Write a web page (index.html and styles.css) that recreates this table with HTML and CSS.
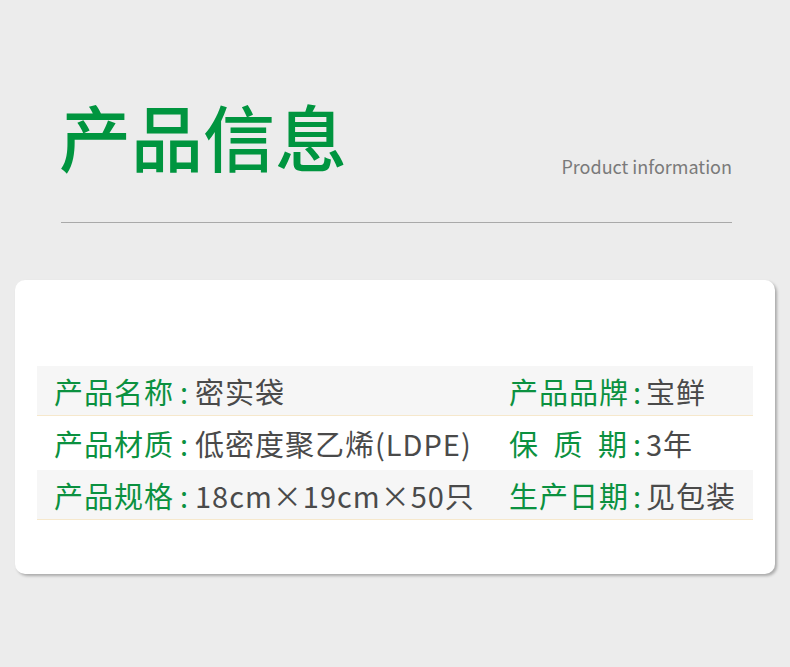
FILE: index.html
```html
<!DOCTYPE html>
<html lang="zh-CN">
<head>
<meta charset="utf-8">
<title>产品信息</title>
<link rel="stylesheet" href="styles.css">
</head>
<body>
<header class="head">
  <h1 class="title">产品信息</h1>
  <div class="subtitle">Product information</div>
</header>
<div class="rule"></div>
<section class="card">
  <div class="row shade">
    <div class="cell"><span class="label">产品名称</span><span class="colon">:</span><span class="value">密实袋</span></div>
    <div class="cell"><span class="label">产品品牌</span><span class="colon">:</span><span class="value">宝鲜</span></div>
  </div>
  <div class="row plain">
    <div class="cell"><span class="label">产品材质</span><span class="colon">:</span><span class="value">低密度聚乙烯(LDPE)</span></div>
    <div class="cell"><span class="label">保质期</span><span class="colon">:</span><span class="value">3年</span></div>
  </div>
  <div class="row shade">
    <div class="cell"><span class="label">产品规格</span><span class="colon">:</span><span class="value">18cm×19cm×50只</span></div>
    <div class="cell"><span class="label">生产日期</span><span class="colon">:</span><span class="value">见包装</span></div>
  </div>
</section>
</body>
</html>
```
FILE: styles.css
```css
html, body {
  margin: 0;
  padding: 0;
}
body {
  background: #ececec;
  width: 790px;
  height: 667px;
  overflow: hidden;
  font-family: "Noto Sans CJK SC", "Noto Sans", sans-serif;
}
.head {
  display: flex;
  justify-content: space-between;
  align-items: flex-start;
  margin: 0 58px 0 61px;
  padding-top: 99px;
  height: 79px;
}
.title {
  margin: 0 0 0 -2px;
  font-size: 72px;
  line-height: 72px;
  font-weight: 500;
  color: #00953f;
}
.subtitle {
  align-self: flex-end;
  font-size: 18px;
  line-height: 24px;
  color: #7a7a7a;
}
.rule {
  height: 1px;
  background: #a9a9a9;
  margin: 44px 58px 0 61px;
}
.card {
  margin: 57px 15px 0 15px;
  background: #fff;
  border-radius: 10px;
  box-shadow: 2px 2px 3px rgba(0, 0, 0, 0.28);
  padding: 86px 22px 55px 22px;
  height: 294px;
  box-sizing: border-box;
}
.row {
  display: grid;
  grid-template-columns: 455px 1fr;
  padding-left: 17px;
  align-items: center;
}
.row.shade {
  background: #f6f6f6;
  height: 50px;
  border-bottom: 1px solid #f6e8cc;
  box-sizing: border-box;
}
.row.plain {
  height: 54px;
}
.cell {
  display: flex;
  align-items: center;
  font-size: 29px;
  line-height: 34px;
  letter-spacing: 1px;
  white-space: nowrap;
}
.label {
  width: 119px;
  color: #0b9140;
  text-align: justify;
  text-align-last: justify;
}
.colon {
  width: 22px;
  text-align: center;
  color: #0b9140;
  letter-spacing: 0;
}
.cell + .cell .colon {
  width: 18px;
}
.value {
  color: #4a4a4a;
}
```
